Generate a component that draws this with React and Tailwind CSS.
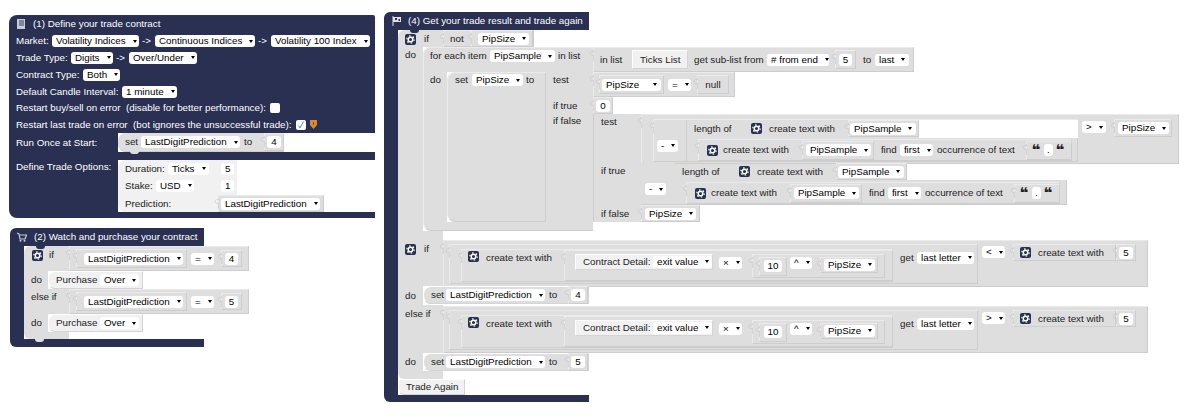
import React from "react";

// Blockly-style bot builder canvas: three free-floating block stacks.

const Caret = () => (
  <svg width="4" height="3" viewBox="0 0 4 3" className="ml-[7px] shrink-0">
    <path d="M0 0h4L2 3z" fill="#000" />
  </svg>
);

const Gear = ({ className = "" }) => (
  <svg width="11" height="11" viewBox="0 0 11 11" className={`shrink-0 ${className}`}>
    <rect width="11" height="11" rx="2" fill="#2a3052" />
    <circle cx="5.5" cy="5.5" r="2.3" fill="none" stroke="#fff" strokeWidth="1.5" />
    <circle cx="5.5" cy="5.5" r="3.7" fill="none" stroke="#fff" strokeWidth="1.2" strokeDasharray="1.6 2.27" />
  </svg>
);

const Tab = () => (
  <svg width="6" height="11" viewBox="0 0 6 11" className="absolute left-[-6px] top-[2px]">
    <path d="M5.5 0v2C1 0 1 7 5.5 5v6" fill="none" stroke="#c4c4c4" strokeOpacity=".6" />
  </svg>
);

// dropdown / number field
const F = ({ children, caret = true, className = "" }) => (
  <span className={`inline-flex h-[12px] shrink-0 items-center rounded-[3px] bg-white px-[4px] text-black ${className}`}>
    {children}
    {caret && <Caret />}
  </span>
);

// value block with an output tab on its left side
const V = ({ children, className = "", tab = true }) => (
  <div className={`relative flex shrink-0 items-center border border-t-[#ebebeb] border-l-[#ebebeb] border-r-[#cdcdcd] border-b-[#cdcdcd] bg-[#dedede] ${className}`}>
    {tab && <Tab />}
    {children}
  </div>
);

const Light = ({ children, className = "" }) => (
  <div className={`relative flex shrink-0 items-center border border-t-white border-l-white border-r-[#d4d4d4] border-b-[#d4d4d4] bg-[#f1f1f1] ${className}`}>
    {children}
  </div>
);

const Gray = ({ children, className = "" }) => (
  <div className={`relative flex shrink-0 bg-[#dedede] ${className}`}>{children}</div>
);

const Bump = ({ color = "bg-[#2a3052]", className = "" }) => (
  <div className={`absolute h-[3px] w-[9px] rounded-b-full ${color} ${className}`} />
);

const Row = ({ children, className = "" }) => (
  <div className={`flex items-center ${className}`}>{children}</div>
);

const Arrow = () => <span className="w-[16px] shrink-0 pl-[3px]">-&gt;</span>;

const Compare = ({ value, op = "=" }) => (
  <V className="h-[25px] w-[180px]">
    <V className="ml-[6px] h-[19px] w-[111px]">
      <F className="ml-[7px] w-[99px] justify-between">LastDigitPrediction</F>
    </V>
    <F className="ml-[4px] w-[23px] justify-between">{op}</F>
    <V className="ml-[7px] h-[17px] w-[21px] justify-center">
      <F caret={false}>{value}</F>
    </V>
  </V>
);

const Purchase = () => (
  <Light className="h-[18px] w-[95px] rounded-l-[7px] pl-[7px]">
    <span className="w-[44px]">Purchase</span>
    <F className="w-[39px] justify-between">Over</F>
  </Light>
);

const Quote = ({ className = "" }) => (
  <span className={`w-[9px] text-center text-[15px] font-bold leading-[10px] [font-family:'DejaVu_Sans',sans-serif] ${className}`}>❝</span>
);

// "create text with" + "find first occurrence of text" row
const FindBlock = () => (
  <V className="h-[22px] w-[374px] pl-[8px]">
    <Gear />
    <span className="ml-[5px] w-[66px]">create text with</span>
    <V className="ml-[13px] h-[19px] w-[72px]">
      <F className="ml-[3px] w-[65px] justify-between">PipSample</F>
    </V>
    <span className="ml-[7px] w-[15px]">find</span>
    <F className="ml-[4px] w-[33px] justify-between">first</F>
    <span className="ml-[4px] w-[78px]">occurrence of text</span>
    <V className="ml-[11px] h-[19px] w-[46px] pl-[5px]">
      <Quote />
      <F caret={false} className="ml-[3px] w-[9px] justify-center !px-0">.</F>
      <Quote className="ml-[3px]" />
    </V>
  </V>
);

const LengthOf = () => (
  <>
    <span className="w-[38px]">length of</span>
    <Gear className="ml-[19px]" />
    <span className="ml-[7px] w-[66px]">create text with</span>
    <V className="ml-[13px] h-[17px] w-[71px]">
      <F className="ml-[1px] w-[66px] justify-between">PipSample</F>
    </V>
  </>
);

const ContractValue = ({ op }) => (
  <V className="h-[47px] w-[705px]">
    <V className="ml-[5px] h-[40px] w-[529px] items-start">
      <V className="ml-[11px] mt-[4px] h-[33px] w-[432px] items-start pl-[6px]">
        <Gear className="mt-[1px]" />
        <span className="ml-[7px] mt-[2px] w-[65px]">create text with</span>
        <V className="ml-[13px] h-[31px] w-[329px] items-start">
          <Light className="ml-[10px] mt-[3px] h-[16px] w-[138px] pl-[7px]">
            <span className="w-[67px]">Contract Detail:</span>
            <F className="ml-[3px] w-[59px] justify-between">exit value</F>
          </Light>
          <F className="ml-[6px] mt-[6px] w-[23px] justify-between">×</F>
          <V className="ml-[10px] mt-[3px] h-[24px] w-[133px] items-start">
            <V className="ml-[6px] mt-[2px] h-[19px] w-[28px] justify-center">
              <F caret={false}>10</F>
            </V>
            <F className="ml-[3px] mt-[2px] w-[22px] justify-between">^</F>
            <V className="ml-[8px] mt-[2px] h-[16px] w-[58px]">
              <F className="ml-[3px] w-[51px] justify-between">PipSize</F>
            </V>
          </V>
        </V>
      </V>
      <span className="ml-[7px] mt-[7px] w-[14px]">get</span>
      <F className="ml-[3px] mt-[7px] w-[57px] justify-between">last letter</F>
    </V>
    <div className="flex h-full items-start pt-[5px]">
      <F className="ml-[4px] w-[23px] justify-between">{op}</F>
      <V className="ml-[8px] mt-[-2px] h-[17px] w-[103px] pl-[6px]">
        <Gear />
        <span className="ml-[7px]">create text with</span>
      </V>
      <V className="mt-[-2px] h-[17px] w-[20px] justify-center">
        <F caret={false}>5</F>
      </V>
    </div>
  </V>
);

const SetBlock = ({ value }) => (
  <Light className="h-[18px] w-[166px] rounded-l-[8px] !bg-[#dedede] pl-[7px]">
    <span className="w-[16px]">set</span>
    <F className="w-[99px] justify-between">LastDigitPrediction</F>
    <span className="ml-[4px] w-[8px]">to</span>
    <V className="ml-[11px] h-[18px] w-[20px] justify-center">
      <F caret={false}>{value}</F>
    </V>
  </Light>
);

const TradeContract = () => (
  <section className="absolute left-[9px] top-[15px] flex h-[203px] w-[366px] flex-col rounded-l-[8px] rounded-tr-[2px] bg-[#2a3052] text-white">
    <Row className="h-[18px] pl-[7px]">
      <svg width="10" height="10" viewBox="0 0 10 10" className="shrink-0">
        <path d="M1 0h8v10H1z" fill="#c9cbd6" />
        <path d="M3 1h5v6H3z" fill="#2a3052" fillOpacity=".45" />
      </svg>
      <span className="ml-[7px]">(1) Define your trade contract</span>
    </Row>
    <Row className="h-[16px] pl-[7px]">
      <span className="w-[36px]">Market:</span>
      <F className="w-[87px] justify-between">Volatility Indices</F>
      <Arrow />
      <F className="w-[100px] justify-between">Continuous Indices</F>
      <Arrow />
      <F className="w-[99px] justify-between">Volatility 100 Index</F>
    </Row>
    <Row className="h-[17px] pl-[7px]">
      <span className="w-[55px]">Trade Type:</span>
      <F className="w-[42px] justify-between">Digits</F>
      <Arrow />
      <F className="w-[68px] justify-between">Over/Under</F>
    </Row>
    <Row className="h-[17px] pl-[7px]">
      <span className="w-[67px]">Contract Type:</span>
      <F className="w-[37px] justify-between">Both</F>
    </Row>
    <Row className="h-[17px] pl-[7px]">
      <span className="w-[106px]">Default Candle Interval:</span>
      <F className="w-[55px] justify-between">1 minute</F>
    </Row>
    <Row className="h-[16px] whitespace-pre pl-[7px]">
      <span className="w-[254px]">Restart buy/sell on error  (disable for better performance):</span>
      <span className="h-[10px] w-[10px] rounded-[2px] bg-white" />
    </Row>
    <Row className="h-[17px] whitespace-pre pl-[7px]">
      <span className="w-[280px]">Restart last trade on error  (bot ignores the unsuccessful trade):</span>
      <span className="flex h-[10px] w-[10px] items-center justify-center rounded-[2px] bg-white">
        <svg width="8" height="8" viewBox="0 0 8 8">
          <path d="M1.500 4.500L3 7l3.500-6.500" fill="none" stroke="#5a8fd0" />
        </svg>
      </span>
      <svg width="7" height="9" viewBox="0 0 7 9" className="ml-[4px]">
        <path d="M0 0h7v5L3.500 9 0 5z" fill="#e08a2e" />
        <path d="M3 2h1v3H3z" fill="#7a4a20" />
      </svg>
    </Row>
    <div className="flex h-[19px]">
      <div className="flex w-[109px] shrink-0 items-center pl-[7px]">Run Once at Start:</div>
      <div className="flex flex-1 bg-white text-[#222]">
        <Gray className="h-[19px] w-[166px] items-center rounded-l-[8px] border-b border-b-[#cdcdcd] pl-[7px]">
          <span className="w-[16px]">set</span>
          <F className="w-[99px] justify-between">LastDigitPrediction</F>
          <span className="ml-[4px] w-[8px]">to</span>
          <V className="ml-[12px] h-[18px] w-[20px] justify-center">
            <F caret={false}>4</F>
          </V>
          <Bump color="bg-[#dedede]" className="bottom-[-3px] left-[12px]" />
        </Gray>
      </div>
    </div>
    <div className="h-[8px]" />
    <div className="flex h-[52px]">
      <div className="w-[109px] shrink-0 pl-[7px] pt-[1px]">Define Trade Options:</div>
      <div className="flex flex-1 flex-col bg-white text-[#222]">
        <div className="relative flex h-[35px] w-[119px] flex-col rounded-tl-[8px] bg-[#f1f1f1]">
          <Row className="h-[17px] pl-[7px]">
            <span className="w-[43px]">Duration:</span>
            <F className="w-[41px] justify-between">Ticks</F>
            <F caret={false} className="ml-[12px]">5</F>
          </Row>
          <Row className="h-[17px] pl-[7px]">
            <span className="w-[31px]">Stake:</span>
            <F className="w-[38px] justify-between">USD</F>
            <F caret={false} className="ml-[27px]">1</F>
          </Row>
        </div>
        <Row className="h-[17px] w-[206px] rounded-bl-[8px] bg-[#f1f1f1] pl-[7px]">
          <span className="w-[93px]">Prediction:</span>
          <V className="h-[17px] w-[106px]">
            <F className="ml-[2px] w-[99px] justify-between">LastDigitPrediction</F>
          </V>
        </Row>
      </div>
    </div>
  </section>
);

const WatchPurchase = () => (
  <section className="absolute left-[10px] top-[228px] flex w-[194px] flex-col text-[#222]">
    <Row className="h-[18px] rounded-tl-[6px] bg-[#2a3052] pl-[7px] text-white">
      <svg width="10" height="10" viewBox="0 0 10 10" className="shrink-0">
        <path d="M0 1l2 1 1 5h5l1.500-4H3" fill="none" stroke="#c9cbd6" strokeWidth="1.2" />
        <circle cx="3.500" cy="8.700" r="1" fill="#c9cbd6" />
        <circle cx="7.500" cy="8.700" r="1" fill="#c9cbd6" />
      </svg>
      <span className="ml-[7px]">(2) Watch and purchase your contract</span>
    </Row>
    <div className="flex">
      <div className="w-[14px] shrink-0 bg-[#2a3052]" />
      <div className="flex flex-col">
        <div className="flex h-[25px]">
          <Gray className="w-[45px] rounded-tl-[7px] pl-[8px] pt-[4px]">
            <Gear />
            <span className="ml-[6px] leading-[10px]">if</span>
            <Bump className="left-[12px] top-0" />
          </Gray>
          <Compare value="4" />
        </div>
        <div className="flex h-[18px]">
          <Gray className="w-[24px] items-center pl-[7px]">do</Gray>
          <Purchase />
        </div>
        <div className="flex h-[25px]">
          <Gray className="w-[45px] pl-[7px] pt-[2px]">else if</Gray>
          <Compare value="5" />
        </div>
        <div className="flex h-[18px]">
          <Gray className="w-[24px] items-center pl-[7px]">do</Gray>
          <Purchase />
        </div>
        <Gray className="h-[7px] w-[45px] rounded-bl-[6px]">
          <Bump color="bg-[#dedede]" className="bottom-[-3px] left-[11px]" />
        </Gray>
      </div>
    </div>
    <div className="h-[8px] rounded-bl-[6px] bg-[#2a3052]" />
  </section>
);

const TradeResult = () => (
  <section className="absolute left-[384px] top-[12px] flex w-[205px] flex-col text-[#222]">
    <Row className="h-[18px] rounded-tl-[6px] bg-[#2a3052] pl-[8px] text-white">
      <svg width="9" height="10" viewBox="0 0 9 10" className="shrink-0">
        <path d="M1 0v10" stroke="#dfe0e6" />
        <path d="M1 1h8v5H1z" fill="#dfe0e6" />
        <path d="M3 2h2v2H3zM6.500 3h1.500v2H6.500z" fill="#2a3052" />
      </svg>
      <span className="ml-[7px]">(4) Get your trade result and trade again</span>
    </Row>
    <div className="flex">
      <div className="w-[14px] shrink-0 bg-[#2a3052]" />
      <div className="flex flex-col">
        {/* if not PipSize */}
        <div className="flex h-[17px]">
          <Gray className="w-[45px] rounded-tl-[7px] pl-[7px] pt-[4px]">
            <Gear />
            <span className="ml-[8px] leading-[10px]">if</span>
            <Bump className="left-[12px] top-0" />
          </Gray>
          <V className="h-[17px] w-[91px] pl-[6px]">
            <span className="w-[16px]">not</span>
            <V className="ml-[7px] h-[17px] w-[62px]">
              <F className="ml-[6px] w-[51px] justify-between">PipSize</F>
            </V>
          </V>
        </div>
        <div className="flex">
          <Gray className="w-[25px] pl-[7px] pt-[2px]">do</Gray>
          <div className="flex flex-col">
            {/* for each item */}
            <div className="flex h-[25px]">
              <Gray className="w-[170px] items-start rounded-tl-[7px] border-l border-t border-[#ebebeb] pl-[6px] pt-[2px]">
                <span className="w-[60px]">for each item</span>
                <F className="w-[65px] justify-between">PipSample</F>
                <span className="ml-[3px]">in list</span>
              </Gray>
              <V className="h-[25px] w-[321px] pl-[6px]">
                <span className="w-[26px]">in list</span>
                <Light className="ml-[6px] h-[19px] w-[56px] pl-[7px]">Ticks List</Light>
                <span className="ml-[6px] w-[73px]">get sub-list from</span>
                <F className="w-[62px] justify-between"># from end</F>
                <V className="ml-[6px] h-[19px] w-[21px] justify-center">
                  <F caret={false}>5</F>
                </V>
                <span className="ml-[7px] w-[8px]">to</span>
                <F className="ml-[4px] w-[34px] justify-between">last</F>
              </V>
            </div>
            <div className="flex h-[150px]">
              <Gray className="w-[24px] border-l border-[#ebebeb] pl-[6px] pt-[2px]">do</Gray>
              {/* set PipSize to test */}
              <Gray className="w-[99px] items-start rounded-l-[8px] border border-t-[#ebebeb] border-l-[#ebebeb] border-r-[#cdcdcd] border-b-[#cdcdcd] pl-[7px] pt-[1px]">
                <span className="w-[17px]">set</span>
                <F className="w-[51px] justify-between">PipSize</F>
                <span className="ml-[3px]">to</span>
              </Gray>
              <div className="flex flex-col">
                <div className="flex h-[25px]">
                  <Gray className="w-[47px] pl-[7px] pt-[2px]">test</Gray>
                  <V className="h-[25px] w-[142px]">
                    <V className="ml-[5px] h-[19px] w-[65px]">
                      <F className="ml-[2px] w-[59px] justify-between">PipSize</F>
                    </V>
                    <F className="ml-[4px] w-[23px] justify-between">=</F>
                    <V className="ml-[6px] h-[19px] w-[32px] justify-center">null</V>
                  </V>
                </div>
                <div className="flex h-[17px]">
                  <Gray className="w-[47px] items-center pl-[7px]">if true</Gray>
                  <V className="h-[17px] w-[20px] justify-center">
                    <F caret={false}>0</F>
                  </V>
                </div>
                <div className="flex">
                  <Gray className="w-[47px] pl-[7px] pt-[1px]">if false</Gray>
                  <div className="flex flex-col">
                    {/* nested ternary: test */}
                    <div className="flex h-[49px]">
                      <Gray className="w-[48px] border-l border-l-[#cdcdcd] pl-[7px] pt-[2px]">test</Gray>
                      <V className="h-[50px] w-[538px] items-start">
                        <V className="ml-[11px] mt-[4px] h-[43px] w-[425px] items-start">
                          <div className="flex h-full">
                            <div className="flex w-[32px] shrink-0 items-center pl-[3px] pt-[10px]">
                              <F className="w-[21px] justify-between">-</F>
                            </div>
                            <div className="flex flex-col">
                              <Row className="h-[17px] border-l border-l-[#cdcdcd] pl-[7px]">
                                <LengthOf />
                              </Row>
                              <div className="flex flex-1 items-end border-l border-l-[#cdcdcd] pl-[11px]">
                                <FindBlock />
                              </div>
                            </div>
                          </div>
                          <div className="absolute left-[265px] top-0 h-[18px] w-[159px] bg-white" />
                        </V>
                        <F className="ml-[4px] mt-[6px] w-[24px] justify-between">&gt;</F>
                        <V className="ml-[8px] mt-[4px] h-[18px] w-[58px]">
                          <F className="ml-[3px] w-[51px] justify-between">PipSize</F>
                        </V>
                      </V>
                    </div>
                    {/* nested ternary: if true */}
                    <div className="flex h-[42px]">
                      <Gray className="w-[48px] border-l border-l-[#cdcdcd] pl-[7px] pt-[2px]">if true</Gray>
                      <div className="flex h-[42px] w-[426px] flex-col">
                        <div className="flex h-[17px]">
                          <Gray className="w-[34px]" />
                          <Row className="h-[17px] bg-[#dedede] pl-[7px]">
                            <LengthOf />
                          </Row>
                        </div>
                        <div className="relative flex h-[25px] w-[426px] items-end border-b border-r border-[#cdcdcd] bg-[#dedede] pl-[45px]">
                          <F className="absolute left-[4px] top-[3px] w-[21px] justify-between">-</F>
                          <FindBlock />
                        </div>
                      </div>
                    </div>
                    {/* nested ternary: if false */}
                    <div className="flex h-[17px]">
                      <Gray className="w-[48px] items-center border-l border-l-[#cdcdcd] pl-[7px]">if false</Gray>
                      <V className="h-[17px] w-[59px]">
                        <F className="ml-[3px] w-[51px] justify-between">PipSize</F>
                      </V>
                    </div>
                  </div>
                </div>
              </div>
            </div>
            <Gray className="h-[9px] w-[170px] rounded-bl-[8px] border-b border-l border-b-[#cdcdcd] border-l-[#ebebeb]" />
          </div>
        </div>
        <Gray className="h-[9px] w-[45px]" />
        {/* if value */}
        <div className="flex h-[46px]">
          <Gray className="w-[45px] pl-[7px] pt-[4px]">
            <Gear />
            <span className="ml-[8px] leading-[10px]">if</span>
          </Gray>
          <ContractValue op="<" />
        </div>
        <div className="flex h-[19px]">
          <Gray className="w-[25px] items-center pl-[7px]">do</Gray>
          <SetBlock value="4" />
        </div>
        <div className="flex h-[48px] items-end">
          <Gray className="h-[48px] w-[45px] pl-[7px] pt-[3px]">else if</Gray>
          <ContractValue op=">" />
        </div>
        <div className="flex h-[18px]">
          <Gray className="w-[25px] items-center pl-[7px]">do</Gray>
          <SetBlock value="5" />
        </div>
        <Gray className="h-[8px] w-[45px] rounded-bl-[6px]">
          <Bump color="bg-[#dedede]" className="bottom-[-3px] left-[11px]" />
        </Gray>
        <Light className="h-[16px] w-[67px] rounded-bl-[6px] pl-[7px]">Trade Again</Light>
      </div>
    </div>
    <div className="h-[7px] rounded-bl-[6px] bg-[#2a3052]" />
  </section>
);

export default function App() {
  return (
    <div className="relative h-[416px] w-[1190px] overflow-hidden whitespace-nowrap bg-white text-[9.8px] leading-[12px] [font-family:'Liberation_Sans',Arial,sans-serif]">
      <TradeContract />
      <WatchPurchase />
      <TradeResult />
    </div>
  );
}
